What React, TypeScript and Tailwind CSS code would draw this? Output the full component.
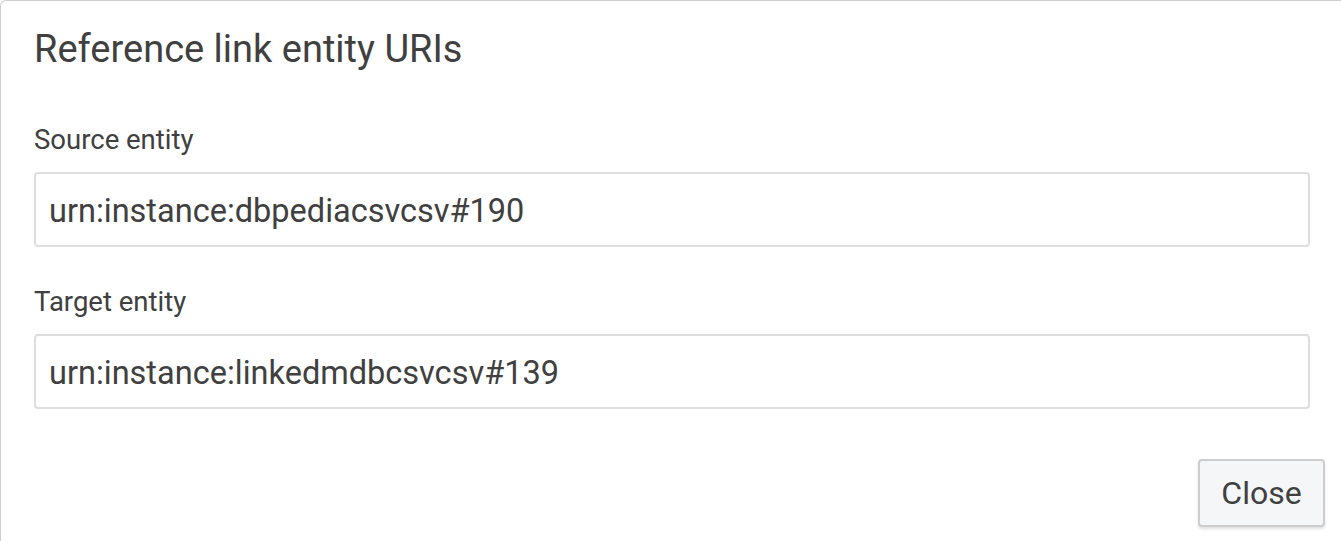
import React from "react";

export default function App() {
  const font = { fontFamily: "Roboto, 'Noto Sans', Arial, sans-serif" };
  return (
    <div
      className="w-[1341px] h-[541px] overflow-hidden bg-white border-l border-t border-[#cfcfcf] rounded-tl-[6px] text-[#404040] flex flex-col"
      style={font}
    >
      <div className="pl-[33px] pr-[31px]">
        <h2 className="mt-[26px] text-[38px] leading-[44px] font-normal">Reference link entity URIs</h2>

        <label className="block mt-[53px] text-[27.5px] leading-[32px]">Source entity</label>
        <input
          readOnly
          value="urn:instance:dbpediacsvcsv#190"
          className="mt-[16px] block w-full h-[75px] border-2 border-[#dedede] rounded-[4px] pl-[13px] pt-[2px] text-[32.5px] text-[#404040] outline-none bg-white"
          style={font}
        />

        <label className="block mt-[39px] text-[27.5px] leading-[32px]">Target entity</label>
        <input
          readOnly
          value="urn:instance:linkedmdbcsvcsv#139"
          className="mt-[16px] block w-full h-[75px] border-2 border-[#dedede] rounded-[4px] pl-[13px] pt-[2px] text-[32.5px] text-[#404040] outline-none bg-white"
          style={font}
        />
      </div>

      <div className="flex justify-end pr-[16px] mt-[50px]">
        <button
          className="w-[127px] h-[68px] bg-[#f5f6f8] border-2 border-[#cdcdcd] rounded-[4px] text-[32px] text-[#404040] shadow-[0_2px_3px_rgba(0,0,0,0.12)]"
          style={font}
        >
          Close
        </button>
      </div>
    </div>
  );
}
